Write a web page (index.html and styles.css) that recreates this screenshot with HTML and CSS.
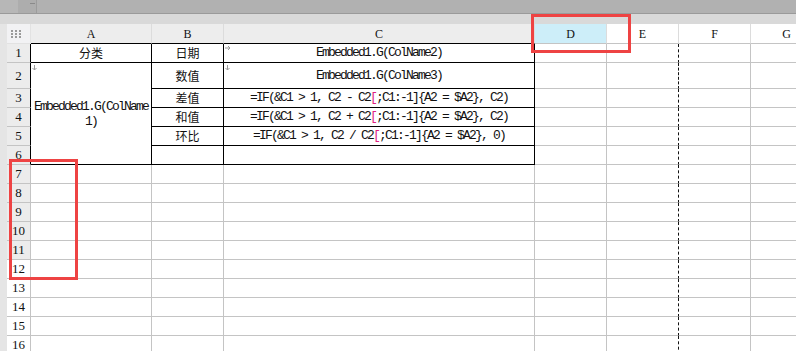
FILE: index.html
```html
<!DOCTYPE html>
<html lang="zh-CN">
<head>
    <meta charset="UTF-8">
    <meta name="viewport" content="width=device-width, initial-scale=1.0">
    <title>报表设计</title>
    <link rel="stylesheet" href="styles.css">
</head>
<body>
    <!-- 顶部标签栏 -->
    <div class="tabbar">
        <div class="tab-lead"></div>
        <div class="tab-stub"><span class="tab-tick"></span></div>
    </div>
    <div class="bar-gap"></div>

    <div class="workspace">
        <div class="gutter"></div>
        <table class="sheet">
            <colgroup>
                <col class="w-hdr">
                <col class="w-a">
                <col class="w-b">
                <col class="w-c">
                <col class="w-d">
                <col class="w-e">
                <col class="w-f">
                <col class="w-g">
            </colgroup>
            <thead>
                <tr class="col-head">
                    <th class="corner">
                        <svg width="10" height="8" viewBox="0 0 10 8">
                            <rect x="0" y="0" width="2" height="2" fill="#9a9a9a"/>
                            <rect x="4" y="0" width="2" height="2" fill="#9a9a9a"/>
                            <rect x="8" y="0" width="2" height="2" fill="#9a9a9a"/>
                            <rect x="0" y="3" width="2" height="2" fill="#9a9a9a"/>
                            <rect x="4" y="3" width="2" height="2" fill="#9a9a9a"/>
                            <rect x="8" y="3" width="2" height="2" fill="#9a9a9a"/>
                            <rect x="0" y="6" width="2" height="2" fill="#9a9a9a"/>
                            <rect x="4" y="6" width="2" height="2" fill="#9a9a9a"/>
                            <rect x="8" y="6" width="2" height="2" fill="#9a9a9a"/>
                        </svg>
                    </th>
                    <th class="hd-used">A</th>
                    <th class="hd-used">B</th>
                    <th class="hd-used">C</th>
                    <th class="hd-sel">D</th>
                    <th>E</th>
                    <th>F</th>
                    <th>G</th>
                </tr>
            </thead>
            <tbody>
                <tr>
                    <th class="row-num edge">1</th>
                    <td class="in cjk">分类</td>
                    <td class="in cjk">日期</td>
                    <td class="in code has-flag">
                        <svg class="flag" width="6" height="4" viewBox="0 0 6 4"><path d="M0 2H5M3 0L5 2L3 4" stroke="#9a9a9a" fill="none"/></svg>
                        Embedded1.G(ColName2)
                    </td>
                    <td></td><td class="split"></td><td></td><td></td>
                </tr>
                <tr class="tall">
                    <th class="row-num edge">2</th>
                    <td class="in code wrap has-flag" rowspan="5">
                        <svg class="flag" width="5" height="6" viewBox="0 0 5 6"><path d="M2.5 0V5M0.5 3L2.5 5L4.5 3" stroke="#9a9a9a" fill="none"/></svg>
                        Embedded1.G(ColName1)
                    </td>
                    <td class="in cjk">数值</td>
                    <td class="in code has-flag">
                        <svg class="flag" width="5" height="6" viewBox="0 0 5 6"><path d="M2.5 0V5M0.5 3L2.5 5L4.5 3" stroke="#9a9a9a" fill="none"/></svg>
                        Embedded1.G(ColName3)
                    </td>
                    <td></td><td class="split"></td><td></td><td></td>
                </tr>
                <tr>
                    <th class="row-num edge">3</th>
                    <td class="in cjk">差值</td>
                    <td class="in code">=IF(&amp;C1 &gt; 1, C2 - C2<span class="mark-br">[</span>;C1:-1]{A2 = $A2}, C2)</td>
                    <td></td><td class="split"></td><td></td><td></td>
                </tr>
                <tr>
                    <th class="row-num edge">4</th>
                    <td class="in cjk">和值</td>
                    <td class="in code">=IF(&amp;C1 &gt; 1, C2 + C2<span class="mark-br">[</span>;C1:-1]{A2 = $A2}, C2)</td>
                    <td></td><td class="split"></td><td></td><td></td>
                </tr>
                <tr>
                    <th class="row-num edge">5</th>
                    <td class="in cjk">环比</td>
                    <td class="in code">=IF(&amp;C1 &gt; 1, C2 / C2<span class="mark-br">[</span>;C1:-1]{A2 = $A2}, 0)</td>
                    <td></td><td class="split"></td><td></td><td></td>
                </tr>
                <tr>
                    <th class="row-num edge">6</th>
                    <td class="in"></td>
                    <td class="in"></td>
                    <td></td><td class="split"></td><td></td><td></td>
                </tr>
                <tr><th class="row-num">7</th><td></td><td></td><td></td><td></td><td class="split"></td><td></td><td></td></tr>
                <tr><th class="row-num">8</th><td></td><td></td><td></td><td></td><td class="split"></td><td></td><td></td></tr>
                <tr><th class="row-num">9</th><td></td><td></td><td></td><td></td><td class="split"></td><td></td><td></td></tr>
                <tr><th class="row-num">10</th><td></td><td></td><td></td><td></td><td class="split"></td><td></td><td></td></tr>
                <tr><th class="row-num">11</th><td></td><td></td><td></td><td></td><td class="split"></td><td></td><td></td></tr>
                <tr><th class="row-num plain">12</th><td></td><td></td><td></td><td></td><td class="split"></td><td></td><td></td></tr>
                <tr><th class="row-num plain">13</th><td></td><td></td><td></td><td></td><td class="split"></td><td></td><td></td></tr>
                <tr><th class="row-num plain">14</th><td></td><td></td><td></td><td></td><td class="split"></td><td></td><td></td></tr>
                <tr><th class="row-num plain">15</th><td></td><td></td><td></td><td></td><td class="split"></td><td></td><td></td></tr>
                <tr><th class="row-num plain">16</th><td></td><td></td><td></td><td></td><td class="split"></td><td></td><td></td></tr>
            </tbody>
        </table>
    </div>

    <!-- 红色标注框 -->
    <div class="callout callout-col"></div>
    <div class="callout callout-rows"></div>
</body>
</html>
```

FILE: styles.css
```css
body {
    margin: 0;
    height: 351px;
    overflow: hidden;
    background-color: #fff;
    font-family: "Liberation Serif", serif;
    color: #111;
}

.tabbar {
    display: flex;
    height: 13px;
    background-color: #b1b1b1;
    border-bottom: 1px solid #9a9a9a;
}

.tab-lead {
    width: 18px;
    background-color: #b7b7b7;
}

.tab-stub {
    position: relative;
    width: 18px;
    background-color: #adadad;
    border-right: 1px solid #9c9c9c;
}

.tab-tick {
    position: absolute;
    left: 12px;
    top: 3px;
    width: 5px;
    height: 1px;
    background-color: #8a8a8a;
}

.bar-gap {
    height: 10px;
    background-color: #d9d9d9;
}

.workspace {
    display: flex;
}

.gutter {
    width: 7px;
    flex-shrink: 0;
    background-color: #e5e5e5;
}

.sheet {
    border-collapse: separate;
    border-spacing: 0;
    table-layout: fixed;
    width: 816px;
    flex-shrink: 0;
}

.w-hdr { width: 24px; }
.w-a { width: 121px; }
.w-b { width: 72px; }
.w-c { width: 311px; }
.w-d { width: 72px; }
.w-e { width: 72px; }
.w-f { width: 72px; }
.w-g { width: 72px; }

.sheet th,
.sheet td {
    padding: 0;
    height: 18px;
    border-right: 1px solid #c4c4c4;
    border-bottom: 1px solid #c4c4c4;
    text-align: center;
    vertical-align: middle;
    white-space: nowrap;
    overflow: hidden;
    font-weight: normal;
    line-height: 14px;
}

.col-head th {
    height: 19px;
    font-size: 12px;
    background-color: #fff;
    border-right-color: #dcdcdc;
    border-bottom-color: #c4c4c4;
}

.col-head .corner {
    background-color: #f2f2f4;
    border-right-color: #e2e2e2;
    border-bottom-color: #e2e2e2;
}

.corner svg {
    display: block;
    margin: 1px 0 0 4px;
}

.col-head .hd-used {
    background-color: #ededed;
    border-bottom-color: #000;
}

.col-head .hd-sel {
    background-color: #cdeef9;
}

.row-num {
    font-size: 13px;
    background-color: #ececec;
}

.row-num.plain {
    background-color: #fff;
}

.row-num.edge {
    border-right-color: #000;
}

.tall th,
.tall td {
    height: 25px;
}

.sheet .in {
    border-right-color: #000;
    border-bottom-color: #000;
}

.sheet .split {
    border-right: 1px dashed #111;
}

.cjk {
    font-family: "Noto Sans CJK SC", sans-serif;
    font-size: 12px;
}

.code {
    font-family: "Liberation Mono", monospace;
    font-size: 13px;
    letter-spacing: -1.8px;
}

.code.wrap {
    white-space: normal;
    word-break: break-all;
    padding: 0 1px;
    line-height: 15px;
}

.mark-br {
    color: #e0207f;
}

.has-flag {
    position: relative;
}

.flag {
    position: absolute;
    left: 1px;
    top: 2px;
}

.callout {
    position: absolute;
    border: 3px solid #ee4343;
    box-sizing: border-box;
}

.callout-col {
    left: 531px;
    top: 14px;
    width: 100px;
    height: 39px;
}

.callout-rows {
    left: 9px;
    top: 159px;
    width: 69px;
    height: 121px;
}
```
